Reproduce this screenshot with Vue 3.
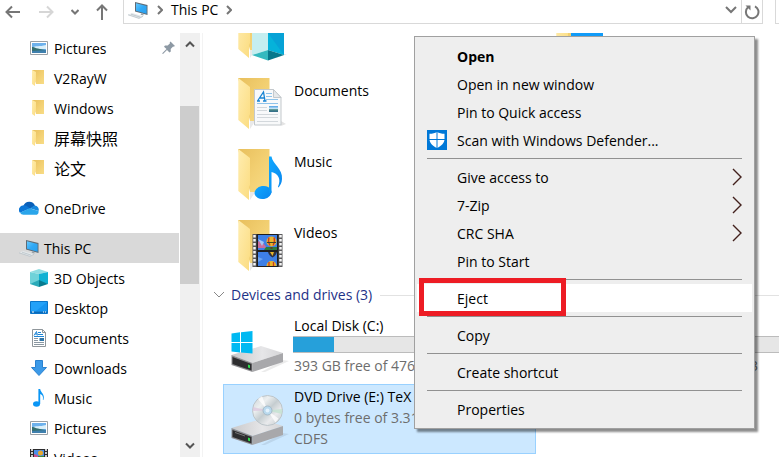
<script setup>
import { ref } from 'vue'

const quick = [
  { label: 'Pictures', icon: 'picture', pinned: true },
  { label: 'V2RayW', icon: 'folder-s' },
  { label: 'Windows', icon: 'folder-s' },
  { label: '屏幕快照', icon: 'folder-s', cjk: true },
  { label: '论文', icon: 'folder-s', cjk: true },
]
const pcItems = [
  { label: '3D Objects', icon: 'cube-s' },
  { label: 'Desktop', icon: 'desktop' },
  { label: 'Documents', icon: 'doc-s' },
  { label: 'Downloads', icon: 'download' },
  { label: 'Music', icon: 'note-s' },
  { label: 'Pictures', icon: 'picture' },
  { label: 'Videos', icon: 'film-s' },
]
const folders = [
  { label: 'Documents', icon: 'doc' },
  { label: 'Music', icon: 'note' },
  { label: 'Videos', icon: 'film' },
]
const groups = [
  [
    { label: 'Open', bold: true },
    { label: 'Open in new window' },
    { label: 'Pin to Quick access' },
    { label: 'Scan with Windows Defender...', shield: true },
  ],
  [
    { label: 'Give access to', sub: true },
    { label: '7-Zip', sub: true },
    { label: 'CRC SHA', sub: true },
    { label: 'Pin to Start' },
  ],
  [{ label: 'Eject', marked: true }],
  [{ label: 'Copy' }],
  [{ label: 'Create shortcut' }],
  [{ label: 'Properties' }],
]
const active = ref('Eject')
const usedC = 17.4
</script>

<template>
  <div class="explorer">
    <svg class="defs" aria-hidden="true">
      <defs>
        <linearGradient id="g-back" x1="0" y1="0" x2="1" y2="1">
          <stop offset="0" stop-color="#e8bf5c" /><stop offset=".5" stop-color="#f2cf71" /><stop offset="1" stop-color="#f8dc86" />
        </linearGradient>
        <linearGradient id="g-flap" x1="0" y1="0" x2="1" y2="1">
          <stop offset="0" stop-color="#ffedb0" /><stop offset="1" stop-color="#fbdc80" />
        </linearGradient>
        <linearGradient id="g-note" x1="0" y1="0" x2="1" y2="1">
          <stop offset="0" stop-color="#10a8ff" /><stop offset="1" stop-color="#0a86ee" />
        </linearGradient>
        <linearGradient id="g-screen" x1="0" y1="0" x2="1" y2="1">
          <stop offset="0" stop-color="#65c9ff" /><stop offset=".5" stop-color="#30a9f6" /><stop offset="1" stop-color="#2aa0ee" />
        </linearGradient>
        <linearGradient id="g-drive" x1="0" y1="0" x2="1" y2="0">
          <stop offset="0" stop-color="#c9c9cb" /><stop offset=".6" stop-color="#e6e6e8" /><stop offset="1" stop-color="#d4d4d6" />
        </linearGradient>
        <linearGradient id="g-disc" x1="0" y1="0" x2="1" y2="1">
          <stop offset="0" stop-color="#c9d0d4" /><stop offset=".3" stop-color="#eceff0" /><stop offset=".5" stop-color="#c5cdd0" />
          <stop offset=".7" stop-color="#e9eaec" /><stop offset="1" stop-color="#bfc8cc" />
        </linearGradient>
        <linearGradient id="g-photo" x1="0" y1="0" x2="0" y2="1">
          <stop offset="0" stop-color="#4f9fe3" /><stop offset=".5" stop-color="#d8f0fb" /><stop offset=".6" stop-color="#4c8a84" /><stop offset="1" stop-color="#2f6a8c" />
        </linearGradient>
      </defs>

      <symbol id="pc" viewBox="0 0 20 18">
        <path d="M7 1 19.500 4v10L7 10.500z" fill="#5f6b75" />
        <path d="M8 2.300 18.600 5v7.700L8 9.800z" fill="url(#g-screen)" />
        <path d="M13.500 12.300l2 .6v1.700l-3-.8z" fill="#9aa3aa" />
        <path d="M0 13.800 4 12l11 3.300-4 2.300z" fill="#e3e8eb" />
        <path d="M0 13.800 11 17.400 15 15.300M3 13.200l9 2.900" fill="none" stroke="#b9c1c7" stroke-width=".8" />
      </symbol>
      <symbol id="cloud" viewBox="0 0 20 14">
        <path d="M4.500 4.500A6.200 6.200 0 0 1 16 4.700L11 8z" fill="#0a5fb8" />
        <path d="M4.500 4.200A4.600 4.600 0 0 0 1 11.800L11 7.500 7.500 4.800Q6 4 4.500 4.200z" fill="#0c76d6" />
        <path d="M11 7.300 15.400 4.600A4 4 0 0 1 19.500 10z" fill="#1788dd" />
        <path d="M1 11.800 10.500 7.200 19.500 10a3.300 3.300 0 0 1-3 3.800H4.500A4 4 0 0 1 1 11.800z" fill="#2aa5ea" />
      </symbol>
      <symbol id="picture" viewBox="0 0 18 18">
        <path d="M.5 2.500h17v13H.5z" fill="#fff" stroke="#9aa0a5" />
        <path d="M2 4h14v10H2z" fill="#6db1ec" />
        <path d="M2 9c4-3 7-1 14-3v4H2z" fill="#d9effa" />
        <path d="M2 8c3 0 4 2 14 3v3H2z" fill="#357071" />
        <path d="M2 12l14-1v3H2z" fill="#3f80ae" />
      </symbol>
      <symbol id="folder-s" viewBox="0 0 18 18">
        <path d="M2 1h12v14H6z" fill="url(#g-back)" />
        <path d="M2 1l4 2v9l-1 .5V17l-3-2z" fill="url(#g-flap)" />
      </symbol>
      <symbol id="cube-s" viewBox="0 0 18 18">
        <path d="M9 0l9 3-9 2L0 3z" fill="#8fdde2" /><path d="M0 3l9 2v9l-9 1z" fill="#6fd2d9" />
        <path d="M18 3 9 5v9l9 1z" fill="#10b1d3" /><path d="M0 15l9-4v7z" fill="#2aaab8" /><path d="M18 15l-9-4v7z" fill="#087b8f" />
      </symbol>
      <symbol id="desktop" viewBox="0 0 18 18">
        <path d="M.5 2.500h17v12H.5z" fill="#23a1f8" stroke="#0b75c9" />
        <path d="M17 3v9L6 12z" fill="#1694f0" /><path d="M1 12.500h16V14H1z" fill="#0969b8" />
        <path d="M2 13h2M13 13h1M15 13h1" stroke="#fff" />
      </symbol>
      <symbol id="doc-s" viewBox="0 0 18 18">
        <path d="M2.500.5h10l3 3v14h-13z" fill="#fff" stroke="#8f969b" /><path d="M12.500.5v3h3" fill="none" stroke="#8f969b" />
        <path d="M4 6.500 6.500 2.500 7.300 6.500M5 5h2.500M8 3.500h3M8 5.500h5M4 7.500h10" fill="none" stroke="#1e85d6" />
        <path d="M4 9.500h4M4 11.500h4M4 13.500h10M4 15.500h10" stroke="#8b98a2" /><path d="M9.500 9h4.500v3H9.500z" fill="#2d74a8" />
      </symbol>
      <symbol id="download" viewBox="0 0 18 18">
        <path d="M5.500 1.500h7v7h4L9 16.500 1.500 8.500h4z" fill="#3c9ae8" stroke="#2a82d0" />
      </symbol>
      <symbol id="note-s" viewBox="0 0 18 18">
        <ellipse cx="6.500" cy="15" rx="3.500" ry="2.700" fill="#0a96f5" />
        <path d="M8.400 0h1.800c.2 3.500 5 5 3.300 10.500-.2.800-.8.700-.6 0 .6-3.200-.7-4.800-2.700-5.500V15H8.400z" fill="#0a96f5" />
      </symbol>
      <symbol id="film-s" viewBox="0 0 18 18">
        <path d="M0 0h18v18H0z" fill="#2c2c2e" /><path d="M4 1h10v7H4zM4 10h10v7H4z" fill="#4a8fe8" />
        <path d="M2 0v18M16 0v18" stroke="#fff" stroke-width="1.500" stroke-dasharray="2 1" />
        <circle cx="10.500" cy="4" r="2.500" fill="#e8a82c" /><path d="M4 5l3 1 2 2H4z" fill="#c9518b" /><path d="M8 7h6v1H8z" fill="#3d8a3a" />
      </symbol>

      <symbol id="fold" viewBox="0 0 52 54">
        <path d="M12 42h6l-6 9z" fill="#e9e9e9" />
        <path d="M0 0h31.500v43H12z" fill="url(#g-back)" />
        <path d="M.3 0 12 9v27l-1 2v13L.3 42z" fill="url(#g-flap)" />
      </symbol>
      <symbol id="cube" viewBox="0 0 52 54">
        <path d="M38 51 49 47H40z" fill="#e4e4e4" />
        <path d="M14 20l16-4 16 4-16 7z" fill="#a5e9ea" />
        <path d="M14 20l16 6v17l-16 5z" fill="#c5eef0" /><path d="M46 20l-16 6v17l16 5z" fill="#05b2da" />
        <path d="M30 26l16-6v28z" fill="#0698d4" opacity=".6" />
        <path d="M14 48l16-5v10.500z" fill="#35b9bf" /><path d="M46 48l-16-5v10.500z" fill="#07788c" />
      </symbol>
      <symbol id="doc" viewBox="0 0 52 54">
        <path d="M43 43l5 3-5 2z" fill="#e4e4e4" />
        <path d="M16.500 11.500h19l7.500 8v27.500H16.500z" fill="#f8f9fa" stroke="#c3c8cc" />
        <path d="M35.500 11.500v8H43z" fill="#e6e9eb" stroke="#c3c8cc" />
        <path d="M19.500 23 25.500 14l1.500 9M22 20h4.500M19 23h3M25 23h3.500" fill="none" stroke="#1683d3" stroke-width="1.300" />
        <path d="M28 15.500h6M28 18.500h6M28 21.500h12M19 25.500h21" stroke="#8ec3ea" />
        <path d="M19 29.500h10M19 32.500h10M19 36.500h21M19 39.500h21M19 43.500h21" stroke="#d3d8dc" />
        <path d="M31 28h9v6h-9z" fill="url(#g-photo)" />
      </symbol>
      <symbol id="note" viewBox="0 0 52 54">
        <ellipse cx="25" cy="43.500" rx="8.500" ry="6.500" transform="rotate(-10 25 43.500)" fill="url(#g-note)" />
        <path d="M31 7.500h2.500C34.500 15 45 20 44 30c-.2 4-1.500 6-3.200 8.200-.8.300-1-.2-.7-.8C43.500 30 40 24.500 33.500 23v21H31z" fill="url(#g-note)" />
      </symbol>
      <symbol id="film" viewBox="0 0 52 54">
        <path d="M14.500 14h30v33h-30z" fill="#5a5a5c" />
        <path d="M16.500 15v32M42.500 15v32" stroke="#f5f5f5" stroke-width="2.500" stroke-dasharray="2.500 1.500" />
        <path d="M18.500 14h22v33h-22z" fill="#1e1e20" />
        <path d="M20 15h19v15H20zM20 32h19v14H20z" fill="#3e7fe6" />
        <path d="M20 21l5 2 4 5H20z" fill="#c76d9e" /><path d="M20 19l6 3-2 4z" fill="#a6c6f5" /><path d="M28 27h11v3H26z" fill="#2d7a3c" />
        <circle cx="33.500" cy="21.500" r="5" fill="#e9b52b" /><path d="M31 17.500q-1.500 4 1 8M36 17.500q1.500 4-1 8" fill="none" stroke="#cc3a24" stroke-width="1.300" />
        <path d="M29 22.500h9" stroke="#38462a" /><path d="M32.500 27h2v2h-2z" fill="#5b3b20" />
        <path d="M30 32h9q-1 4-4.500 5.500Q31 36 30 32z" fill="#2f3142" /><path d="M32 32h4l-1.500 4z" fill="#e9b52b" />
        <path d="M28.500 46a5 5 0 0 1 10 0z" fill="#e9b52b" /><path d="M31 46v-4M35.500 46v-4" stroke="#cc3a24" stroke-width="1.300" />
        <path d="M20 37l5 2-5 3z" fill="#6ea5f2" />
      </symbol>
      <symbol id="drive" viewBox="0 0 62 30">
        <path d="M30 27 52 15 58 16 34 27z" fill="#000" opacity=".08" />
        <path d="M.5 10 30 1 52 8 21.500 18z" fill="url(#g-drive)" />
        <path d="M52 8v9L21.500 27V18z" fill="#a8a8ab" />
        <path d="M.5 10 21.500 18v9L.5 20z" fill="#8d8d90" />
        <path d="M1.500 12 20.500 19v6.500L1.500 19z" fill="#2e2e30" />
        <path d="M17 19.500l2 .7v3l-2-.7z" fill="#2fe04d" />
      </symbol>
      <symbol id="disk-c" viewBox="0 0 62 66">
        <use href="#drive" y="30" width="62" height="30" />
        <path d="M.5 18.500 9 17.300V27H.5zM10 17.200 21.500 16v11H10zM.5 28H9v9.500L.5 36.500zM10 28h11.500v10.500L10 37.500z" fill="#00b9f2" />
      </symbol>
      <symbol id="disk-dvd" viewBox="0 0 62 66">
        <use href="#drive" y="32" width="62" height="30" />
        <path d="M4 46.500l10 3.500" stroke="#777" />
        <circle cx="36.500" cy="24.500" r="15" fill="url(#g-disc)" stroke="#bcc5ca" />
        <path d="M36.500 24.500 27 13l4-3zM36.500 24.500l11 8-3 4z" fill="#fff" opacity=".75" />
        <path d="M36.500 24.500 22 21v4z" fill="#dcc5dd" opacity=".7" /><path d="M36.500 24.500 51 23v5z" fill="#c3e2d1" opacity=".8" />
        <circle cx="36.500" cy="24.500" r="4.500" fill="#b9d9ee" stroke="#a5bac8" /><circle cx="36.500" cy="24.500" r="2" fill="#e2f2fd" />
      </symbol>
    </svg>

    <header class="topbar">
      <nav class="arrows" aria-label="History">
        <button aria-label="Back"><svg width="16" height="14" viewBox="0 0 16 14"><path d="M15 7H1.500M7 1.500 1.500 7 7 12.500" class="st" /></svg></button>
        <button aria-label="Forward" disabled><svg width="16" height="14" viewBox="0 0 16 14"><path d="M1 7h13.500M9 1.500 14.500 7 9 12.500" class="st pale" /></svg></button>
        <button aria-label="Recent locations"><svg width="8" height="8" viewBox="0 0 8 8"><path d="M.5 2 4 5.500 7.500 2" class="st" /></svg></button>
        <button aria-label="Up"><svg width="12" height="16" viewBox="0 0 12 16"><path d="M6 16V1.500M1 6.500l5-5 5 5" class="st" /></svg></button>
      </nav>
      <div class="address">
        <svg class="pc" width="20" height="18"><use href="#pc" /></svg>
        <svg class="sep" width="6" height="10" viewBox="0 0 6 10"><path d="M1 1l4 4-4 4" class="st" /></svg>
        <button class="crumb">This PC</button>
        <svg class="sep" width="6" height="10" viewBox="0 0 6 10"><path d="M1 1l4 4-4 4" class="st" /></svg>
        <button class="drop" aria-label="Previous locations"><svg width="12" height="8" viewBox="0 0 12 8"><path d="M1 1l5 5 5-5" class="st" /></svg></button>
      </div>
      <button class="refresh" aria-label="Refresh">
        <svg width="16" height="16" viewBox="0 0 16 16"><path d="M11 2.300A6.300 6.300 0 1 1 4 3.200" class="st" /><path d="M1.500 1.500h5v5z" fill="#767676" /></svg>
      </button>
      <div class="search"></div>
    </header>

    <div class="body">
      <aside class="side">
        <nav class="tree" aria-label="Folders">
          <button v-for="q in quick" :key="q.label" class="row deep">
            <svg width="18" height="18"><use :href="'#' + q.icon" /></svg>
            <span :class="{ cjk: q.cjk }">{{ q.label }}</span>
            <svg v-if="q.pinned" class="pin" width="14" height="14" viewBox="0 0 14 14">
              <path d="M8.500.5 13 5l-1.500.7-.4-.2L8.700 8l.1 2.600-1.300 1L5 9 1 13l-.7-.2L.5 12l4-4L2 5.700l1-1.200 2.700.1L8 2.200 7.700 1.500z" fill="#8d99a4" />
            </svg>
          </button>
          <button class="row root"><svg width="20" height="14"><use href="#cloud" /></svg><span>OneDrive</span></button>
          <button class="row root current"><svg width="20" height="18"><use href="#pc" /></svg><span>This PC</span></button>
          <button v-for="p in pcItems" :key="p.label" class="row deep">
            <svg width="18" height="18"><use :href="'#' + p.icon" /></svg>
            <span>{{ p.label }}</span>
          </button>
        </nav>
        <div class="scroll">
          <svg width="10" height="8" viewBox="0 0 10 8"><path d="M1 6.500l4-4 4 4" class="st dark" /></svg>
          <div class="track"><div class="thumb"></div></div>
          <svg width="10" height="8" viewBox="0 0 10 8"><path d="M1 1.500l4 4 4-4" class="st dark" /></svg>
        </div>
      </aside>

      <main class="content">
        <div class="tiles folders">
          <div class="tile"><svg width="52" height="54"><use href="#fold" /><use href="#cube" /></svg></div>
          <div class="tile"><svg width="52" height="54" viewBox="0 0 52 54"><use href="#fold" width="52" height="54" /><path d="M15 17h32v26H15z" fill="#109bf8" /></svg></div>
          <button v-for="f in folders" :key="f.label" class="tile wide">
            <svg width="52" height="54"><use href="#fold" /><use :href="'#' + f.icon" /></svg>
            <span>{{ f.label }}</span>
          </button>
        </div>

        <h2 class="heading">
          <svg width="12" height="8" viewBox="0 0 12 8"><path d="M1 1l5 5 5-5" class="st thin" /></svg>
          <span>Devices and drives (3)</span>
        </h2>

        <div class="tiles drives">
          <div class="drive">
            <svg width="62" height="66"><use href="#disk-c" /></svg>
            <div class="info">
              <div class="name">Local Disk (C:)</div>
              <div class="bar"><div class="fill" :style="{ width: usedC + '%' }"></div></div>
              <div class="meta">393 GB free of 476 GB</div>
            </div>
          </div>
          <div class="drive">
            <div class="info second">
              <div class="bar"></div>
              <div class="meta">3</div>
            </div>
          </div>
          <div class="drive selected">
            <svg width="62" height="66"><use href="#disk-dvd" /></svg>
            <div class="info">
              <div class="name">DVD Drive (E:) TeX</div>
              <div class="meta">0 bytes free of 3.31 GB</div>
              <div class="meta">CDFS</div>
            </div>
          </div>
        </div>
      </main>
    </div>

    <div class="menu" role="menu">
      <div v-for="(g, i) in groups" :key="i" class="group" role="group">
        <button
          v-for="m in g"
          :key="m.label"
          role="menuitem"
          class="item"
          :class="{ bold: m.bold, hot: m.label === active }"
        >
          <span class="glyph">
            <svg v-if="m.shield" width="20" height="20" viewBox="0 0 20 20">
              <path d="M0 0h20v20H0z" fill="#0078d7" />
              <path d="M10 2c2 1.200 4.500 1.800 7.500 1.800V9c0 4-3 7-7.500 9-4.500-2-7.500-5-7.500-9V3.800C5.500 3.800 8 3.200 10 2z" fill="#fff" />
              <path d="M10 2v16M2 9.500h16" stroke="#0078d7" />
            </svg>
          </span>
          <span class="text">{{ m.label }}</span>
          <svg v-if="m.sub" class="more" width="10" height="18" viewBox="0 0 10 18"><path d="M1 1l8 8-8 8" fill="none" stroke="#42201c" stroke-width="1.400" /></svg>
          <span v-if="m.marked" class="mark"></span>
        </button>
      </div>
    </div>
  </div>
</template>

<style>
body { margin: 0; background: #fff; }
</style>

<style scoped>
.explorer {
  position: relative;
  display: flex;
  flex-direction: column;
  box-sizing: border-box;
  height: 100vh;
  padding-bottom: 7px;
  overflow: hidden;
  background: #fff;
  color: #000;
  font: 14px/20px "Open Sans", "Noto Sans", "Noto Sans CJK SC", sans-serif;
}
.defs { position: absolute; width: 0; height: 0; }
button {
  display: flex;
  align-items: center;
  padding: 0;
  border: 0;
  background: none;
  color: inherit;
  font: inherit;
  text-align: left;
}
svg { flex: none; display: block; }
.st { fill: none; stroke: #767676; stroke-width: 2; }
.pale { stroke: #d6d6d6; }
.dark { stroke: #555; }
.thin { stroke: #888; stroke-width: 1; }

.topbar { display: flex; flex: none; height: 24px; margin-bottom: 9px; }
.arrows { display: flex; align-items: center; justify-content: space-between; width: 118px; padding: 0 10px 0 5px; box-sizing: border-box; }
.address {
  display: flex;
  flex: 1;
  align-items: center;
  padding: 0 4px 4px;
  border: solid #d9d9d9;
  border-width: 0 1px 1px;
  margin-left: 5px;
}
.sep { margin: 0 8px; }
.pc + .sep { margin-left: 9px; }
.drop { margin-left: auto; }
.refresh { justify-content: center; width: 21px; border: solid #d9d9d9; border-width: 0 1px 1px 0; }
.search { width: 4px; margin-left: 12px; border: solid #d9d9d9; border-width: 0 0 1px 1px; box-sizing: border-box; }

.body { display: flex; flex: 1; min-height: 0; }
.side { display: flex; flex: none; width: 203px; box-sizing: border-box; border-right: 1px solid #f3f3f3; overflow: hidden; }
.tree { flex: 1; padding-right: 1px; }
.row { width: 100%; height: 30px; }
.row span, .text { padding-top: 2px; }
.cjk { font-size: 16px; }
.deep { gap: 6px; padding-left: 30px; }
.root { gap: 5px; padding-left: 19px; margin-top: 10px; }
.current { background: #d9d9d9; }
.pin { margin-left: auto; margin-right: 3px; }
.scroll {
  display: flex;
  flex-direction: column;
  align-items: center;
  gap: 7px;
  width: 20px;
  box-sizing: border-box;
  padding: 7px 0;
  margin-right: 2px;
  background: #f0f0f0;
}
.track { flex: 1; width: 100%; padding-top: 51px; box-sizing: border-box; }
.thumb { width: 19px; height: 178px; background: #cdcdcd; }

.content { flex: 1; min-width: 0; overflow: hidden; }
.tiles { display: grid; grid-template-columns: 313px 313px; column-gap: 5px; margin-left: 20px; }
.folders { grid-auto-rows: 54px; row-gap: 17px; margin-top: -26px; }
.tile { display: flex; align-items: flex-start; gap: 4px; padding-left: 15px; }
.tile span { padding-top: 3px; }
.wide { grid-column: 1; }
.heading {
  display: flex;
  align-items: center;
  height: 24px;
  margin: 9px 0 6px 10px;
  color: #1e3287;
  font: inherit;
  gap: 6px;
}
.heading::after { content: ""; flex: 1; height: 1px; margin-left: 2px; background: #e2e2e2; }
.drives { grid-auto-rows: 70px; row-gap: 1px; }
.drive { display: flex; box-sizing: border-box; padding: 1px 5px 1px 7px; border: 1px solid transparent; line-height: 21px; overflow: hidden; }
.selected { background: #cce8ff; border-color: #99d1ff; }
.info { flex: 1; min-width: 0; white-space: nowrap; }
.name, .meta { padding-left: 1px; }
.meta { color: #6d6d6d; }
.bar { height: 15px; margin-bottom: 2px; border: solid #bcbcbc; border-width: 1px 0; background: #e6e6e6; }
.fill { height: 15px; background: #26a0da; }
.second { padding: 21px 0 0 62px; }
.second .meta { padding-left: 139px; }

.menu {
  position: absolute;
  top: 36px;
  left: 414px;
  width: 341px;
  box-sizing: border-box;
  padding: 5px 2px;
  border: 1px solid #a0a0a0;
  background: #eee;
  box-shadow: 3px 3px 2px rgba(0, 0, 0, 0.45);
}
.group + .group::before { content: ""; display: block; height: 1px; margin: 4px 10px; background: #919191; }
.item { position: relative; width: 100%; height: 28px; padding: 0 10px; }
.glyph { width: 30px; }
.text { flex: 1; }
.bold { font-weight: 700; }
.hot { background: #fff; }
.mark { position: absolute; top: -6px; left: 2px; width: 137px; height: 28px; border: 5px solid #ed1c24; }
</style>
